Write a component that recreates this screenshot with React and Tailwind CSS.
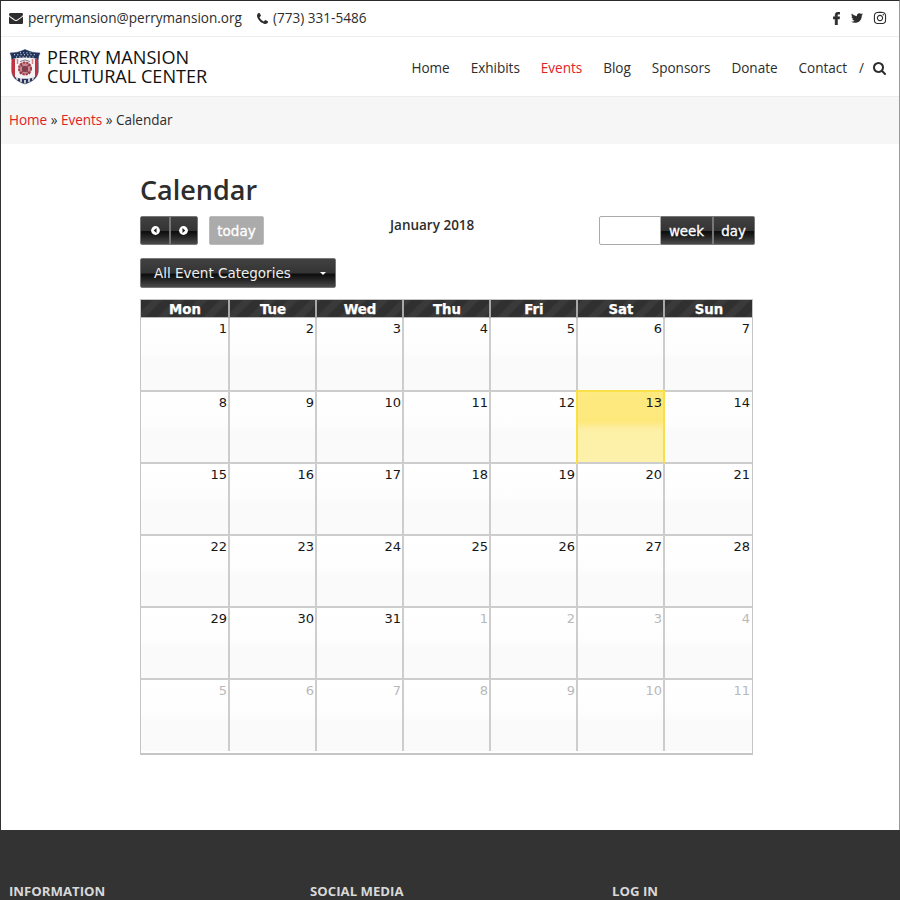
import { FaTwitter, FaInstagram } from "react-icons/fa";

const NAV = [
  ["Home", "ml-0"],
  ["Exhibits", "ml-[21px]"],
  ["Events", "ml-[21px] text-[#e02224]"],
  ["Blog", "ml-[21px]"],
  ["Sponsors", "ml-[21px]"],
  ["Donate", "ml-[21px]"],
  ["Contact", "ml-[21px]"],
];
const DAYS = ["Mon", "Tue", "Wed", "Thu", "Fri", "Sat", "Sun"];
const ROWS = ["h-[74px]", "h-[72px]", "h-[72px]", "h-[72px]", "h-[72px]", "h-[71px]"];
const COLS = "grid grid-cols-[89px_87px_87px_87px_87px_87px_87px]";
const GLOSS = "bg-[linear-gradient(#414141_0%,#343434_50%,#0c0c0c_54%,#222_72%,#4a4a4a_100%)]";

function Envelope() {
  return (
    <svg className="h-[11px] w-[14px]" viewBox="0 256 1792 1408" fill="currentColor">
      <path d="M1792 710v794q0 66-47 113t-113 47h-1472q-66 0-113-47t-47-113v-794q44 49 101 87 362 246 497 345 57 42 92.5 65.5t94.5 48 110 24.5h2q51 0 110-24.5t94.5-48 92.5-65.5q170-123 498-345 57-39 100-87zm0-294q0 79-49 151t-122 123q-376 261-468 325-10 7-42.5 31t-54 38.5-52 32.5-57.5 27-50 9h-2q-23 0-50-9t-57.5-27-52-32.5-54-38.5-42.5-31q-91-64-262-182.5t-205-142.5q-62-42-117-115.5t-55-136.5q0-78 41.5-130t118.5-52h1472q65 0 112.5 47t47.5 113z" />
    </svg>
  );
}

function Phone() {
  return (
    <svg className="size-[11px]" viewBox="0 128 1408 1408" fill="currentColor">
      <path d="M1408 1240q0 27-10 70.5t-21 68.5q-21 50-122 106-94 51-186 51-27 0-52.5-3.5t-57.5-12.5-47.5-14.5-55.5-20.5-49-18q-98-35-175-83-128-79-264.5-215.5t-215.5-264.5q-48-77-83-175-3-9-18-49t-20.5-55.5-14.5-47.5-12.5-57.5-3.5-52.5q0-92 51-186 56-101 106-122 25-11 68.5-21t70.5-10q14 0 21 3 18 6 53 76 11 19 30 54t35 63.5 31 53.5q3 4 17.5 25t21.5 35.5 7 28.5q0 20-28.5 50t-62 55-62 53-28.5 46q0 9 5 22.5t8.5 20.5 14 24 11.5 19q76 137 174 235t235 174q2 1 19 11.5t24 14 20.5 8.5 22.5 5q18 0 46-28.5t53-62 55-62 50-28.5q14 0 28.5 7t35.5 21.5 25 17.5q25 15 53.5 31t63.5 35 54 30q70 35 76 53 3 7 3 21z" />
    </svg>
  );
}

function Facebook() {
  return (
    <svg className="h-[13px] w-[7px]" viewBox="479 0 864 1664" fill="currentColor" stroke="currentColor" strokeWidth="60">
      <path d="M1343 12v264h-157q-86 0-116 36t-30 108v189h293l-39 296h-254v759h-306v-759h-255v-296h255v-218q0-186 104-288.5t277-102.5q147 0 228 12z" />
    </svg>
  );
}

function Search() {
  return (
    <svg className="size-[13px]" viewBox="0 0 1664 1664" fill="currentColor">
      <path d="M1152 704q0-185-131.5-316.5t-316.5-131.5-316.5 131.5-131.5 316.5 131.5 316.5 316.5 131.5 316.5-131.5 131.5-316.5zm512 832q0 52-38 90t-90 38q-54 0-90-38l-343-342q-179 124-399 124-143 0-273.5-55.5t-225-150-150-225-55.5-273.5 55.5-273.5 150-225 225-150 273.5-55.5 273.5 55.5 225 150 150 225 55.5 273.5q0 220-124 399l343 343q37 37 37 90z" />
    </svg>
  );
}

function Crest() {
  const shield = "M1 4C6 4 11 3 16 .5C21 3 26 4 31 4C28 9 30 14 29.500 20C29.500 28 25 32 16 35C7 32 2.500 28 2.500 20C2 14 4 9 1 4Z";
  return (
    <svg className="h-[36px] w-[32px]" viewBox="0 0 32 36">
      <defs>
        <clipPath id="crest"><path d={shield} /></clipPath>
      </defs>
      <path d={shield} fill="#f4f2f4" />
      <g clipPath="url(#crest)">
        <path d="M4.500 10V29M27.500 10V29" stroke="#c3323f" strokeWidth="3" />
        <path d="M8.500 10V15M23.500 10V15" stroke="#d9848c" strokeWidth="1.500" />
        <path d="M2 26C8 31 24 31 30 26V36H2Z" fill="#25355a" />
        <path d="M8 27V31M12 29V33M16 31V35M20 29V33M24 27V31" stroke="#f1e9ec" strokeWidth="1.600" />
        <path d="M0 0H32V11C23 7.500 9 7.500 0 11Z" fill="#1f3157" />
        <path d="M5 5.800H28M7 8H26" stroke="#e8edf6" strokeWidth="1.100" strokeDasharray="1.100 2.200" />
        <path d="M11 3.800H22" stroke="#e8edf6" strokeWidth="1" strokeDasharray="1 2.200" />
      </g>
      <circle cx="16" cy="19.500" r="6.800" fill="#c58b92" />
      <circle cx="16" cy="19.500" r="6" fill="none" stroke="#a33b48" strokeWidth="2" strokeDasharray="2 1.200" />
      <circle cx="16" cy="20" r="3" fill="#6b4353" />
      <path d="M11 15L21 25M21 15L11 25" stroke="#923744" strokeWidth="1.200" />
      <path d="M11 12.500Q16 9.500 21 12.500" fill="none" stroke="#7f8190" strokeWidth="1" />
      <path d={shield} fill="none" stroke="#35476d" strokeWidth=".6" />
    </svg>
  );
}

function Arrow({ flip }) {
  return (
    <svg className="size-[9px]" viewBox="0 0 10 10">
      <circle cx="5" cy="5" r="4.900" fill="#fff" />
      <path d={flip ? "M3.800 2.300L7 5L3.800 7.700Z" : "M6.200 2.300L3 5L6.200 7.700Z"} fill="#222" />
    </svg>
  );
}

function Cell({ index, last }) {
  const muted = index >= 31;
  const today = index === 12;
  const side = index % 7 === 6 ? "pr-[2px]" : today ? "border-r-2 border-r-[#f9df48] pr-px" : "border-r-2 border-r-[#cdcdcd] pr-px";
  const bg = today
    ? "relative bg-[linear-gradient(#fdea80_0%,#fde87c_42%,#fdf0a6_54%,#fdf1ab_100%)] shadow-[-2px_0_0_#f9df48,0_-2px_0_#f9df48,-2px_-2px_0_#f9df48]"
    : "bg-[linear-gradient(#fff_0%,#fdfdfd_48%,#fafafa_58%,#fafafa_100%)]";
  return (
    <div className={`${side} ${bg} ${last ? "" : "border-b-2 border-b-[#cdcdcd]"} pt-[2px] text-right text-[13px] leading-[18px] ${muted ? "text-[#b9b9b9]" : "text-[#161616]"}`}>
      {muted ? index - 30 : index + 1}
    </div>
  );
}

export default function App() {
  return (
    <div className="flex h-[900px] w-[900px] flex-col overflow-hidden bg-[#333] font-['Open_Sans',sans-serif] text-[13.57px] text-[#2d2d2d]">
      <div className="flex h-[830px] shrink-0 flex-col border-l border-r border-t border-l-[#333] border-r-[#999] border-t-[#2b292b] bg-white">
        <div className="flex h-[36px] items-center border-b border-[#eee] pb-px pl-2 pr-[12px]">
          <Envelope />
          <span className="ml-[5px] w-[229px] whitespace-nowrap">perrymansion@perrymansion.org</span>
          <Phone />
          <span className="ml-[5px] whitespace-nowrap">(773) 331-5486</span>
          <div className="ml-auto flex items-center">
            <Facebook />
            <FaTwitter className="ml-[11px] size-[12px]" />
            <FaInstagram className="ml-[10px] size-[14px]" />
          </div>
        </div>
        <header className="flex h-[60px] items-center border-b border-[#ececec] pl-2 pr-[13px]">
          <Crest />
          <div className="ml-[6px] whitespace-nowrap text-[18.1px] leading-[19px] text-[#111]">
            <div>PERRY MANSION</div>
            <div>CULTURAL CENTER</div>
          </div>
          <nav className="ml-auto flex items-center whitespace-nowrap pt-[3px] tracking-[-0.03px]">
            {NAV.map(([label, cls]) => <a key={label} className={cls}>{label}</a>)}
            <span className="ml-[12px] mr-[9px]">/</span>
            <Search />
          </nav>
        </header>
        <div className="h-[47px] bg-[#f6f6f6] pl-2 leading-[46px] tracking-[-0.03px]">
          <span className="text-[#e02224]">Home</span> » <span className="text-[#e02224]">Events</span> » Calendar
        </div>
        <main className="ml-[139px] w-[615px] pt-[25px]">
          <h1 className="h-[47px] text-[27px] font-semibold leading-[42px]">Calendar</h1>
          <div className="flex h-[29px] font-['DejaVu_Sans',sans-serif] text-[13px] font-medium text-white">
            <div className={`flex w-[58px] rounded-[2px] border border-[#777] ${GLOSS}`}>
              <div className="flex w-[30px] items-center justify-center border-r-2 border-[#777]"><Arrow /></div>
              <div className="flex flex-1 items-center justify-center pr-px"><Arrow flip /></div>
            </div>
            <div className="ml-[11px] flex w-[55px] items-center justify-center rounded-[2px] border border-[#bbb] bg-[#ababab] pt-px text-[13.5px] [-webkit-text-stroke:0.3px_white]">today</div>
            <div className="ml-[126px] w-[150px] font-['Open_Sans',sans-serif] text-[13.5px] font-semibold leading-[18px] text-[#2d2d2d]">January 2018</div>
            <div className="ml-auto flex w-[156px]">
              <div className="w-[62px] rounded-l-[2px] border border-[#aaa] bg-white" />
              <div className={`flex flex-1 rounded-r-[2px] border border-l-0 border-[#777] [-webkit-text-stroke:0.3px_white] ${GLOSS}`}>
                <div className="flex w-[53px] items-center justify-center border-r-2 border-[#777] pt-[3px] text-[13.4px]">week</div>
                <div className="flex flex-1 items-center justify-center pr-px pt-[3px] text-[13.4px]">day</div>
              </div>
            </div>
          </div>
          <div className={`mt-[13px] flex h-[30px] w-[196px] items-center rounded-[2px] border border-[#777] pl-[13px] pr-[9px] font-['DejaVu_Sans',sans-serif] text-[13.5px] text-[#eee] ${GLOSS}`}>
            <span>All Event Categories</span>
            <svg className="ml-auto h-[3px] w-[6px]" viewBox="0 0 6 3"><path d="M0 0H6L3 3Z" fill="#fff" /></svg>
          </div>
          <div className="mt-[11px] w-[613px] border border-b-2 border-[#c5c5c5] bg-white pb-[2px] font-['DejaVu_Sans',sans-serif]">
            <div className={`${COLS} h-[18px] border-b border-[#bbb] bg-[repeating-linear-gradient(135deg,#303030_0px,#303030_7px,#3a3a3a_9px,#3a3a3a_14px,#303030_16px)]`}>
              {DAYS.map((d, i) => (
                <div key={d} className={`pl-px text-center text-[13.3px] font-bold leading-[19px] text-white [-webkit-text-stroke:0.25px_white] ${i < 6 ? "border-r-2 border-[#a8a8a8]" : ""}`}>{d}</div>
              ))}
            </div>
            {ROWS.map((h, r) => (
              <div key={r} className={`${COLS} ${h}`}>
                {DAYS.map((d, c) => <Cell key={d} index={r * 7 + c} last={r === 5} />)}
              </div>
            ))}
          </div>
        </main>
      </div>
      <footer className="grid grid-cols-[301px_302px_1fr] pl-[9px] pt-[51px] text-[13.2px] font-bold leading-[20px] text-[#d8d8d8]">
        <div>INFORMATION</div>
        <div>SOCIAL MEDIA</div>
        <div>LOG IN</div>
      </footer>
    </div>
  );
}
